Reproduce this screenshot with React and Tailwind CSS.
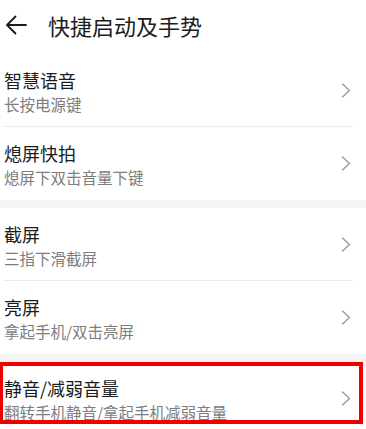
import React from "react";

const groups = [
  [
    { title: "智慧语音", sub: "长按电源键" },
    { title: "熄屏快拍", sub: "熄屏下双击音量下键" },
  ],
  [
    { title: "截屏", sub: "三指下滑截屏" },
    { title: "亮屏", sub: "拿起手机/双击亮屏" },
  ],
  [{ title: "静音/减弱音量", sub: "翻转手机静音/拿起手机减弱音量" }],
];

function Chevron() {
  return (
    <svg width="10" height="15" viewBox="0 0 10 15" fill="none" className="shrink-0">
      <path d="M1.5 1 L8.5 7.5 L1.5 14" stroke="#9a9a9a" strokeWidth="1.4" strokeLinecap="round" strokeLinejoin="round" />
    </svg>
  );
}

function Row({ item, last }) {
  return (
    <div className="flex pl-[4px] pr-[13px]">
      <div className={"flex-1 flex items-center h-[73px] " + (last ? "" : "border-b border-[#ebebeb]")}>
        <div className="flex-1 self-start pt-[14px]">
          <div className="text-[18px] leading-[24px] text-[#1c1c1c]">{item.title}</div>
          <div className="mt-[1px] text-[15.5px] leading-[22px] text-[#7d7d7d]">{item.sub}</div>
        </div>
        <div className="pr-[2px]">
          <Chevron />
        </div>
      </div>
    </div>
  );
}

export default function App() {
  return (
    <div
      className="relative w-[366px] h-[429px] overflow-hidden bg-white"
      style={{ fontFamily: '"Noto Sans CJK SC", "Noto Sans", sans-serif' }}
    >
      <div className="flex items-center h-[54px] pl-[5px] pb-[4px]">
        <svg width="22" height="20" viewBox="0 0 22 20" fill="none">
          <path d="M2 10 H21 M10.5 1.5 L2 10 L10.5 18.5" stroke="#1c1c1c" strokeWidth="1.8" strokeLinecap="round" strokeLinejoin="round" />
        </svg>
        <div className="ml-[21px] text-[22px] leading-[30px] text-[#1c1c1c]">快捷启动及手势</div>
      </div>

      {groups.map((g, gi) => (
        <div key={gi}>
          {gi > 0 && <div className="h-[8px] bg-[#f4f4f4]" />}
          {g.map((item, i) => (
            <Row key={i} item={item} last={i === g.length - 1} />
          ))}
        </div>
      ))}

      <div className="absolute left-[-1px] top-[362px] w-[364px] h-[62px] border-[4px] border-[#ee0000] pointer-events-none" />
    </div>
  );
}
